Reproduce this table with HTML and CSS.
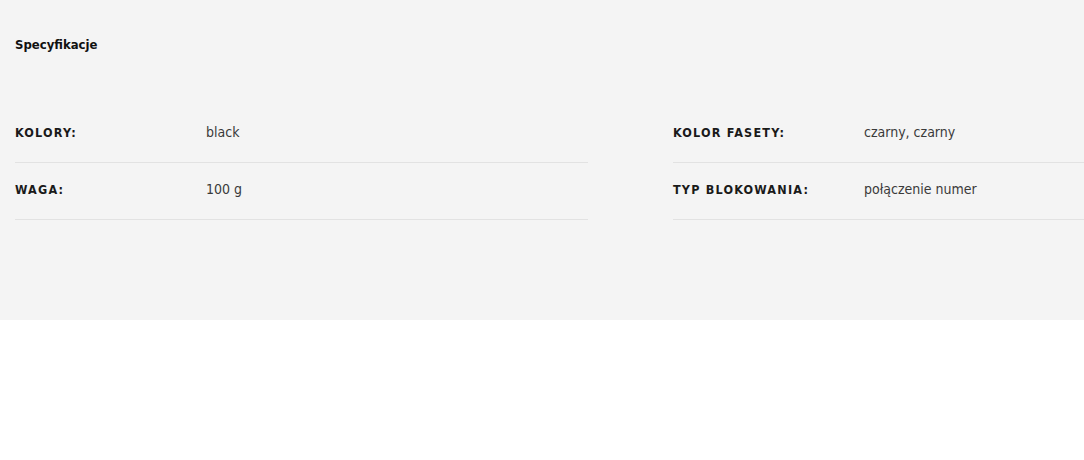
FILE: index.html
```html
<!DOCTYPE html>
<html lang="pl">
<head>
<meta charset="utf-8">
<link rel="stylesheet" href="styles.css">
</head>
<body>
<section class="specs">
  <h2 class="specs-title">Specyfikacje</h2>
  <div class="specs-grid">
    <div class="spec-col">
      <div class="spec-row"><span class="spec-label">Kolory:</span><span class="spec-value">black</span></div>
      <div class="spec-row"><span class="spec-label">Waga:</span><span class="spec-value">100 g</span></div>
    </div>
    <div class="spec-col">
      <div class="spec-row"><span class="spec-label">Kolor fasety:</span><span class="spec-value">czarny, czarny</span></div>
      <div class="spec-row"><span class="spec-label">Typ blokowania:</span><span class="spec-value">połączenie numer</span></div>
    </div>
  </div>
</section>
</body>
</html>
```
FILE: styles.css
```css
html, body {
  margin: 0;
  padding: 0;
  background: #ffffff;
  overflow: hidden;
}
.specs {
  background: #f4f4f4;
  height: 320px;
  box-sizing: border-box;
  padding: 30px 0 0 15px;
  overflow: hidden;
  font-family: "DejaVu Sans Condensed", "DejaVu Sans", sans-serif;
  color: #1b1b1b;
}
.specs-title {
  margin: 0;
  font-size: 13px;
  font-weight: bold;
  line-height: 30px;
  color: #111;
}
.specs-grid {
  margin-top: 46px;
  display: grid;
  grid-template-columns: 573px 573px;
  column-gap: 85px;
}
.spec-row {
  display: flex;
  align-items: center;
  height: 52px;
  padding-bottom: 4px;
  border-bottom: 1px solid #e2e2e2;
}
.spec-label {
  width: 191px;
  flex: none;
  text-transform: uppercase;
  font-weight: bold;
  font-size: 12.5px;
  letter-spacing: 1.2px;
  color: #1a1a1a;
}
.spec-value {
  font-size: 14px;
  color: #3a3a3a;
}
```
